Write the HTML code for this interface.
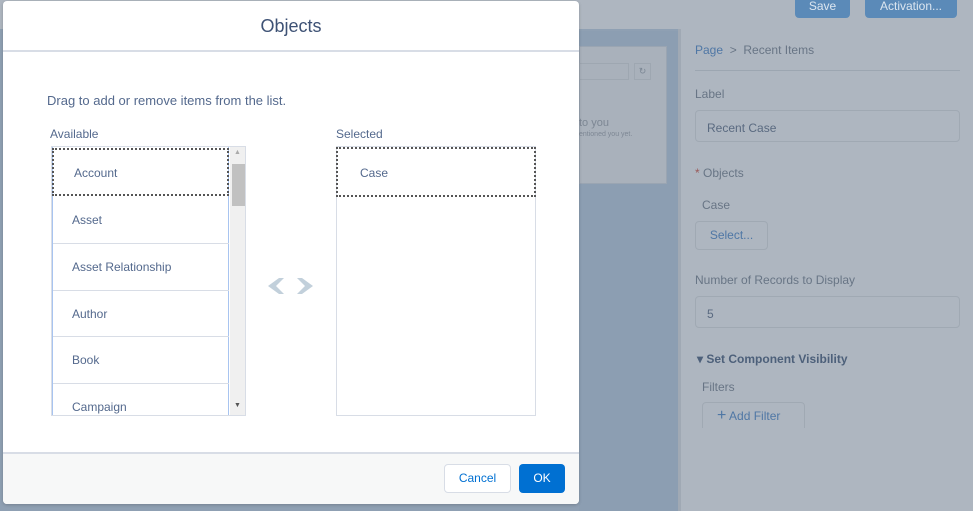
<!DOCTYPE html>
<html><head><style>
*{box-sizing:border-box;margin:0;padding:0}
body{width:973px;height:511px;overflow:hidden;background:#8fa0b3;font-family:"Liberation Sans",sans-serif;position:relative;color:#16325c}
.abs{position:absolute}
.t{font-size:12px;color:#687585}
</style></head><body>
<div class="abs" style="left:0;top:0;width:973px;height:29px;background:#aeb6c0"></div>
<div class="abs" style="left:795px;top:0;width:55px;height:18px;background:#5b8ab8;border-radius:0 0 4px 4px;color:#dce6f0;font-size:12px;text-align:center;line-height:12px">Save</div>
<div class="abs" style="left:865px;top:0;width:92px;height:18px;background:#5b8ab8;border-radius:0 0 4px 4px;color:#dce6f0;font-size:12px;text-align:center;line-height:12px">Activation...</div>
<div class="abs" style="left:579px;top:31px;width:99px;height:480px;background:#8c9eb2"></div>
<div class="abs" style="left:579px;top:46px;width:88px;height:138px;background:#a9b1bb;border:1px solid #9aa5b2"></div>
<div class="abs" style="left:579px;top:63px;width:50px;height:17px;border:1px solid #9ea7b1"></div>
<div class="abs" style="left:634px;top:63px;width:17px;height:17px;border:1px solid #9ea7b1;font-size:9px;color:#7b8794;text-align:center;line-height:15px">↻</div>
<div class="abs" style="left:579px;top:117px;font-size:11px;color:#7d8794">to you</div>
<div class="abs" style="left:579px;top:131px;font-size:7px;color:#7d8794">entioned you yet.</div>
<div class="abs" style="left:678px;top:29px;width:3px;height:482px;background:#a0a9b4"></div>
<div class="abs" style="left:681px;top:29px;width:292px;height:482px;background:#aeb6c0"></div>
<div class="abs t" style="left:695px;top:43px"><span style="color:#4f77a5">Page</span> &nbsp;&gt;&nbsp; Recent Items</div>
<div class="abs" style="left:695px;top:70px;width:265px;height:1px;background:#9ca6b1"></div>
<div class="abs t" style="left:695px;top:87px">Label</div>
<div class="abs" style="left:695px;top:110px;width:265px;height:32px;border:1px solid #a0a9b3;border-radius:4px;font-size:12px;color:#5a6a80;padding:10px 11px">Recent Case</div>
<div class="abs t" style="left:695px;top:166px"><span style="color:#9a5a5a">*</span> Objects</div>
<div class="abs t" style="left:702px;top:198px">Case</div>
<div class="abs" style="left:695px;top:221px;width:73px;height:29px;border:1px solid #a0a9b3;border-radius:4px;font-size:12px;color:#4f77a5;text-align:center;line-height:27px">Select...</div>
<div class="abs t" style="left:695px;top:273px">Number of Records to Display</div>
<div class="abs" style="left:695px;top:296px;width:265px;height:32px;border:1px solid #a0a9b3;border-radius:4px;font-size:12px;color:#5a6a80;padding:10px 11px">5</div>
<div class="abs" style="left:697px;top:352px;font-size:12px;font-weight:bold;color:#4d607a">▾ Set Component Visibility</div>
<div class="abs t" style="left:702px;top:380px">Filters</div>
<div class="abs" style="left:702px;top:402px;width:103px;height:26px;border:1px solid #a0a9b3;border-bottom:none;border-radius:4px 4px 0 0;font-size:12px;color:#4f77a5;padding:6px 0 0 14px"><span style="font-size:16px;line-height:10px">+</span> Add Filter</div>

<div class="abs" style="left:3px;top:1px;width:576px;height:503px;background:#fff;border-radius:4px;overflow:hidden;box-shadow:0 1px 3px rgba(0,0,0,.2)">
 <div class="abs" style="left:0;top:0;width:576px;height:51px;border-bottom:2px solid #d8dde6;text-align:center;font-size:18px;color:#3e5275;line-height:50px">Objects</div>
 <div class="abs" style="left:44px;top:92px;font-size:13px;color:#54698d">Drag to add or remove items from the list.</div>
 <div class="abs" style="left:47px;top:126px;font-size:12px;color:#54698d">Available</div>
 <div class="abs" style="left:333px;top:126px;font-size:12px;color:#54698d">Selected</div>
 <div class="abs" style="left:48px;top:145px;width:195px;height:270px;border:1px solid #d8dde6;overflow:hidden">
  <div class="abs" style="left:0;top:0;width:177px;height:269px;border-right:1px solid #a8c4f0;border-left:1px solid #a8c4f0"></div>
  <div class="abs" style="left:0;top:1px;width:177px;height:48px;border:2px dotted #555;font-size:12px;color:#54698d;padding:16px 20px">Account</div>
  <div class="abs" style="left:1px;top:50px;width:176px;height:47px;border-bottom:1px solid #d8dde6;font-size:12px;color:#54698d;padding:16px 19px">Asset</div>
  <div class="abs" style="left:1px;top:97px;width:176px;height:47px;border-bottom:1px solid #d8dde6;font-size:12px;color:#54698d;padding:16px 19px">Asset Relationship</div>
  <div class="abs" style="left:1px;top:144px;width:176px;height:46px;border-bottom:1px solid #d8dde6;font-size:12px;color:#54698d;padding:16px 19px">Author</div>
  <div class="abs" style="left:1px;top:190px;width:176px;height:47px;border-bottom:1px solid #d8dde6;font-size:12px;color:#54698d;padding:16px 19px">Book</div>
  <div class="abs" style="left:1px;top:237px;width:176px;height:47px;font-size:12px;color:#54698d;padding:16px 19px">Campaign</div>
  <div class="abs" style="left:178px;top:0;width:17px;height:270px;background:#f0f0f0"></div>
  <div class="abs" style="left:182px;top:2px;font-size:7px;color:#aaa">▲</div>
  <div class="abs" style="left:180px;top:17px;width:13px;height:42px;background:#c1c1c1"></div>
  <div class="abs" style="left:182px;top:255px;font-size:7px;color:#555">▼</div>
 </div>
 <svg class="abs" style="left:260px;top:275px" width="60" height="20"><path d="M16 2 L5 10 L16 18 L21 18 L13 10 L21 2Z" fill="#c2d0db"/><path d="M39 2 L50 10 L39 18 L34 18 L42 10 L34 2Z" fill="#c2d0db"/></svg>
 <div class="abs" style="left:333px;top:145px;width:200px;height:270px;border:1px solid #d8dde6">
  <div class="abs" style="left:-1px;top:0;width:200px;height:50px;border:2px dotted #555;font-size:12px;color:#54698d;padding:17px 22px">Case</div>
 </div>
 <div class="abs" style="left:0;top:451px;width:576px;height:52px;background:#f7f8f8;border-top:2px solid #d8dde6"></div>
 <div class="abs" style="left:441px;top:463px;width:67px;height:29px;border:1px solid #d8dde6;border-radius:4px;background:#fff;font-size:12px;color:#0070d2;text-align:center;line-height:27px">Cancel</div>
 <div class="abs" style="left:516px;top:463px;width:46px;height:29px;border-radius:4px;background:#0070d2;font-size:12px;color:#fff;text-align:center;line-height:29px">OK</div>
</div>
</body></html>
